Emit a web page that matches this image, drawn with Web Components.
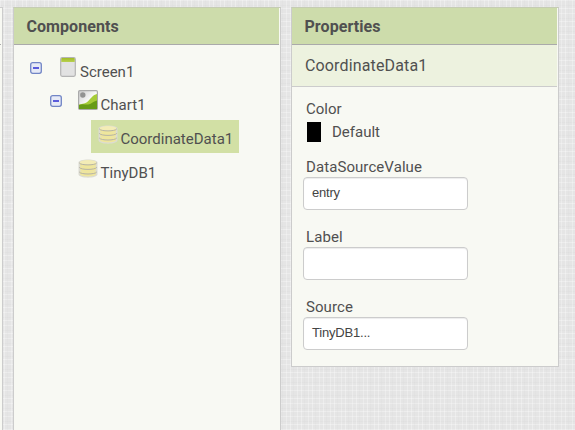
<!DOCTYPE html>
<html lang="en"><head><meta charset="utf-8"><title>Designer</title>
<style>html,body{margin:0;height:100%;overflow:hidden}body{font-family:Roboto,sans-serif;color:#505050}</style></head>
<body>
<designer-page>
 <side-strip></side-strip>
 <tool-panel class="components" heading="Components">
  <component-tree>
   <tree-row label="Screen1" icon="screen" level="0" open></tree-row>
   <tree-row label="Chart1" icon="chart" level="1" open></tree-row>
   <tree-row label="CoordinateData1" icon="db" level="2" selected></tree-row>
   <tree-row label="TinyDB1" icon="db" level="1"></tree-row>
  </component-tree>
 </tool-panel>
 <tool-panel class="properties" heading="Properties">
  <panel-subtitle>CoordinateData1</panel-subtitle>
  <color-field label="Color">Default</color-field>
  <text-field label="DataSourceValue">entry</text-field>
  <text-field label="Label"></text-field>
  <text-field label="Source">TinyDB1...</text-field>
 </tool-panel>
</designer-page>
<script>
class Base extends HTMLElement{
  connectedCallback(){ if(!this.shadowRoot) this.attachShadow({mode:'open'}).innerHTML=this.view(); }
  a(n){return this.getAttribute(n)||'';}
}
customElements.define('designer-page',class extends Base{view(){return `<style>
:host{display:flex;align-items:flex-start;box-sizing:border-box;width:575px;height:430px;padding-top:7px;overflow:hidden;background:
repeating-linear-gradient(90deg,#ffffff48 0 1px,transparent 1px 4px,#ffffff50 4px 5px,transparent 5px 7px,#d0d0d020 7px 8px,transparent 8px 11px),
repeating-linear-gradient(0deg,#ffffff48 0 1px,transparent 1px 5px,#ffffff50 5px 6px,transparent 6px 8px,#cfcfcf28 8px 9px,transparent 9px 13px),#e5e5e5}
::slotted(.components){width:268px;height:440px;margin-left:10px}
::slotted(.properties){width:268px;height:360px;margin-left:10px}
</style><slot></slot>`}});
customElements.define('side-strip',class extends Base{view(){return `<style>
:host{display:block;box-sizing:border-box;width:3px;height:430px;background:#f8f9f3;border-top:1px solid #ccc;border-right:1px solid #ccc}
i{display:block;width:1px;height:36px;background:#f8f9f3;border-bottom:1px solid #aaa}</style><i></i>`}});
customElements.define('tool-panel',class extends Base{view(){return `<style>
:host{display:block;flex:none;box-sizing:border-box;background:#f8f9f3;border:1px solid #ccc;border-top-color:#c5ccb4}
h2{margin:0 1px 0 0;box-sizing:border-box;height:37px;padding-left:12.5px;background:#cddcab;border-bottom:1px solid #aaa;font:700 16px/37px Roboto,sans-serif;letter-spacing:.06px;color:#505050}
</style><h2>${this.a('heading')}</h2><slot></slot>`}});
customElements.define('component-tree',class extends Base{view(){return `<style>:host{display:flex;flex-direction:column;padding:7px 0 0 15px}</style><slot></slot>`}});
const icons={
screen:`<svg width="16" height="20" viewBox="0 0 16 20"><defs><linearGradient id="g" x2="0" y2="1"><stop stop-color="#a2bd25"/><stop offset="1" stop-color="#b8d052"/></linearGradient></defs><rect x=".7" y=".7" width="14.6" height="18.6" rx="1.5" fill="#e2e2e2" stroke="#b4b4b4" stroke-width="1.2"/><path d="M1.3 5V2Q1.3 1 2.3 1H13.7Q14.7 1 14.7 2V5Z" fill="url(#g)"/></svg>`,
chart:`<svg width="20" height="20" viewBox="0 0 20 20"><defs><linearGradient id="s" x2="1" y2="1"><stop stop-color="#ccc"/><stop offset=".6" stop-color="#fff"/></linearGradient></defs><rect x=".6" y=".6" width="18.8" height="18.8" rx="1.2" fill="url(#s)" stroke="#aaa" stroke-width="1.2"/><circle cx="4.8" cy="5" r="2.7" fill="#929292"/><path d="M1 14.5C5 13.5 7 14 10 11.2 13.5 8 14.8 5 19 4V19H1Z" fill="#a6cc39"/><path d="M1 15C6 13 9 16 13 13.6 16 11.8 17 11 19 10.6V19H1Z" fill="#679b17"/></svg>`,
db:`<svg width="20" height="19" viewBox="0 0 20 19"><path d="M.5 3.5C.5-.6 19.5-.6 19.5 3.5V15.3C19.5 19.8.5 19.8.5 15.3Z" fill="#dcdcd2"/><g fill="#efe69c"><path d="M2 12.2v2.9c0 3.2 16 3.2 16 0v-2.9Z"/><path d="M2 7.6v2.9c0 3.2 16 3.2 16 0V7.6Z"/><path d="M2 3.4v2.5c0 3.2 16 3.2 16 0V3.4Z"/><ellipse cx="10" cy="3.4" rx="8.3" ry="2.3" fill="#f3ecb6"/></g><path d="M1.2 3.8C2.5 6.6 17.5 6.6 18.8 3.8M1.2 8.3C2.5 11.1 17.5 11.1 18.8 8.3M1.2 12.9C2.5 15.7 17.5 15.7 18.8 12.9" fill="none" stroke="#b5b3a6" stroke-width="1"/></svg>`};
customElements.define('tree-row',class extends Base{view(){
const l=+this.a('level'),k=this.a('icon');
return `<style>
:host{display:flex;align-items:flex-start;height:34px;padding-left:${l*20}px}
:host([selected]){height:33px}
.toggle{flex:none;width:13px;padding:${l?9:10}px 0 0 1px;margin-right:${l?15:17}px}
.toggle svg{display:block}
.item{display:flex;height:33px;box-sizing:border-box}
:host([selected]) .item{background:#d2e0a5;width:148px;margin-left:-7px;padding-left:7px}
.icon{width:${l?20:18}px;padding-top:${k=='db'?(l==2?5:6):k=='chart'?4:5}px}
.icon svg{display:block}
.text{font-size:15px;line-height:20px;padding:${l==1&&k=='db'||!l?10:9}px 0 0 ${l==2?2.5:l?2.6:2}px;color:#505050;white-space:nowrap}
</style><div class="toggle">${this.hasAttribute('open')?`<svg width="12" height="12" viewBox="0 0 12 12"><rect x=".7" y=".7" width="10.6" height="10.6" rx="2" fill="#e6eaf6" stroke="#7185c5" stroke-width="1.3"/><path d="M3 6h6" stroke="#1d1dd0" stroke-width="1.4"/></svg>`:''}</div><div class="item"><div class="icon">${icons[k]}</div><div class="text">${this.a('label')}</div></div>`}});
customElements.define('panel-subtitle',class extends Base{view(){return `<style>
:host{display:block;box-sizing:border-box;height:42px;margin-right:1px;padding-left:13px;background:#edf2df;border-bottom:1px solid #ccc;font-size:16px;line-height:41px;letter-spacing:.15px;color:#505050}</style><slot></slot>`}});
customElements.define('color-field',class extends Base{view(){return `<style>
:host{display:block;height:58px;padding:12px 0 0 14px;box-sizing:border-box;font-size:15px;line-height:20px}
.v{display:flex;align-items:center;gap:11px;margin-top:3px}i{width:14px;height:20px;margin-left:1px;background:#000}</style><div>${this.a('label')}</div><div class="v"><i></i><span><slot></slot></span></div>`}});
customElements.define('text-field',class extends Base{view(){return `<style>
:host{display:block;height:70px;padding:12px 0 0 11px;box-sizing:border-box;font-size:15px;line-height:20px}
.l{padding-left:3px;letter-spacing:.08px}
.box{box-sizing:border-box;width:165px;height:33px;border:1px solid #ccc;border-radius:4px;background:#fff;box-shadow:inset 0 1px 1px #00000013;padding-left:8px;font:13px/30px "Liberation Sans",sans-serif;letter-spacing:-.2px;color:#444}
</style><div class="l">${this.a('label')}</div><div class="box"><slot></slot></div>`}});
</script></body></html>
